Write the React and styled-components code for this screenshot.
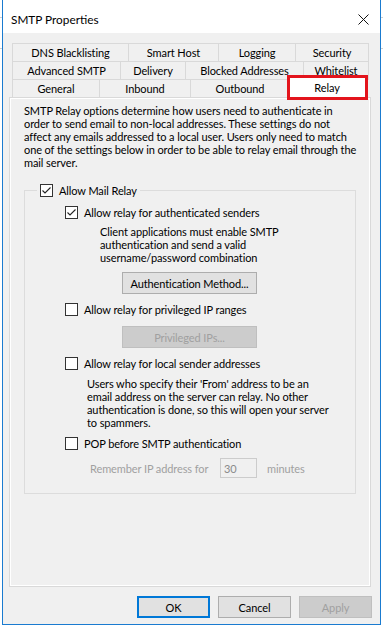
import React from "react";
import styled, { createGlobalStyle } from "styled-components";

const GlobalStyle = createGlobalStyle`
  html, body { margin: 0; padding: 0; }
  body {
    background-color: #fff;
    background-image: linear-gradient(#cfcfcf, #cfcfcf), linear-gradient(#cfcfcf, #cfcfcf);
    background-size: 100% 1px, 100% 1px;
    background-position: 0 17px, 0 48px;
    background-repeat: no-repeat;
    font-family: Lato, "Liberation Sans", sans-serif;
    font-size: 11px;
    letter-spacing: -0.1px;
    color: #000;
  }
  #root { min-height: 633px; }
`;

const Window = styled.div`
  margin-left: 2px;
  width: 377px;
  height: 624px;
  border: 1px solid #1a7bd0;
  border-top: none;
  background: #f0f0f0;
  display: flex;
  flex-direction: column;
`;

const TitleBar = styled.div`
  height: 33px;
  box-sizing: border-box;
  padding: 5px 11px 0 8px;
  background: #fff;
  display: flex;
  align-items: center;
  justify-content: space-between;
`;

const Title = styled.span`
  font-size: 11.8px;
  letter-spacing: 0;
`;

const Body = styled.div`
  display: flex;
  flex-direction: column;
  padding: 10px 9px 0 6px;
`;

const TabStrip = styled.div`
  position: relative;
  margin-left: 3px;
  width: 357px;
  display: flex;
  flex-direction: column;
`;

const TabRow = styled.div`
  display: flex;
  height: 18px;
`;

const Tab = styled.div`
  width: ${(p) => p.$w + 1}px;
  height: ${(p) => (p.$selected ? 22 : 19)}px;
  margin-top: ${(p) => (p.$selected ? -2 : 0)}px;
  margin-left: ${(p) => (p.$selected ? -2 : 0)}px;
  margin-right: -1px;
  box-sizing: border-box;
  border: 1px solid #d9d9d9;
  border-bottom: ${(p) => (p.$selected ? "none" : "1px solid #d9d9d9")};
  background: ${(p) => (p.$selected ? "#fff" : "#f0f0f0")};
  position: relative;
  z-index: ${(p) => (p.$selected ? 2 : 0)};
  display: flex;
  align-items: center;
  justify-content: center;
  padding-bottom: ${(p) => (p.$selected ? 2 : 0)}px;
  white-space: nowrap;
  overflow: hidden;
`;

const Highlight = styled.div`
  position: absolute;
  left: 275px;
  top: 32px;
  width: 81px;
  height: 25px;
  box-sizing: border-box;
  border: 3px solid #e3141c;
  z-index: 3;
  pointer-events: none;
`;

const Panel = styled.div`
  width: 362px;
  height: 490px;
  box-sizing: border-box;
  border: 1px solid #d9d9d9;
  box-shadow: inset 1px 1px 0 #fff, inset -1px -1px 0 #fff;
  padding: 6px 14px 0 14px;
  display: flex;
  flex-direction: column;
  align-items: flex-start;
`;

const Text = styled.div`
  line-height: 13px;
  white-space: nowrap;
  margin-left: ${(p) => p.$ml || 0}px;
  margin-top: ${(p) => p.$mt || 0}px;
`;

const GroupBox = styled.fieldset`
  margin: 13px 0 0 0;
  padding: 0 0 15px 12px;
  width: 332px;
  box-sizing: border-box;
  border: 1px solid #dcdcdc;
  min-width: 0;
  display: flex;
  flex-direction: column;
  align-items: flex-start;
`;

const Legend = styled.legend`
  padding: 0 3px;
  height: 16px;
`;

const OptionRow = styled.label`
  display: flex;
  align-items: center;
  gap: 6px;
  height: ${(p) => p.$h || 15}px;
  margin-left: ${(p) => p.$ml || 0}px;
  margin-top: ${(p) => p.$mt || 0}px;
  white-space: nowrap;
`;

const Box = styled.span`
  width: 13px;
  height: 13px;
  box-sizing: border-box;
  border: 1px solid #333;
  background: #fff;
  display: flex;
  flex-shrink: 0;
`;

const Button = styled.div`
  width: ${(p) => p.$w}px;
  height: 22px;
  box-sizing: border-box;
  margin-left: ${(p) => p.$ml || 0}px;
  margin-top: ${(p) => p.$mt || 0}px;
  background: ${(p) => (p.$disabled ? "#cccccc" : "#e1e1e1")};
  border: ${(p) =>
    p.$default ? "2px solid #0078d7" : p.$disabled ? "1px solid #bfbfbf" : "1px solid #adadad"};
  color: ${(p) => (p.$disabled ? "#a0a0a0" : "#000")};
  display: flex;
  align-items: center;
  justify-content: center;
  white-space: nowrap;
`;

const RememberRow = styled.div`
  display: flex;
  align-items: center;
  height: 20px;
  margin-left: 53px;
  margin-top: 7px;
  color: #a0a0a0;
`;

const RememberLabel = styled.span`
  width: 130px;
  white-space: nowrap;
`;

const NumberBox = styled.div`
  width: 37px;
  height: 20px;
  box-sizing: border-box;
  border: 1px solid #cccccc;
  background: #f0f0f0;
  color: #8a8a8a;
  padding-left: 3px;
  display: flex;
  align-items: center;
`;

const Unit = styled.span`
  margin-left: 10px;
`;

const Footer = styled.div`
  display: flex;
  justify-content: flex-end;
  gap: 8px;
  margin-top: 9px;
  margin-right: -1px;
`;

function CheckBox({ checked }) {
  return (
    <Box>
      {checked && (
        <svg width="11" height="11" viewBox="0 0 11 11">
          <path d="M1.5 5.5 L4 8 L9.5 2.5" fill="none" stroke="#222" strokeWidth="1.1" />
        </svg>
      )}
    </Box>
  );
}

function CloseIcon() {
  return (
    <svg width="11" height="11" viewBox="0 0 11 11">
      <path d="M0.5 0.5 L10.5 10.5 M10.5 0.5 L0.5 10.5" stroke="#111" strokeWidth="1" />
    </svg>
  );
}

const tabRows = [
  [
    ["DNS Blacklisting", 116],
    ["Smart Host", 90],
    ["Logging", 77],
    ["Security", 73],
  ],
  [
    ["Advanced SMTP", 108],
    ["Delivery", 65],
    ["Blocked Addresses", 118],
    ["Whitelist", 65],
  ],
  [
    ["General", 87],
    ["Inbound", 91],
    ["Outbound", 99],
    ["Relay", 79, true],
  ],
];

const intro = [
  "SMTP Relay options determine how users need to authenticate in",
  "order to send email to non-local addresses. These settings do not",
  "affect any emails addressed to a local user. Users only need to match",
  "one of the settings below in order to be able to relay email through the",
  "mail server.",
];

const authDesc = [
  "Client applications must enable SMTP",
  "authentication and send a valid",
  "username/password combination",
];

const localDesc = [
  "Users who specify their 'From' address to be an",
  "email address on the server can relay. No other",
  "authentication is done, so this will open your server",
  "to spammers.",
];

function Lines({ lines, ml, mt }) {
  return (
    <Text $ml={ml} $mt={mt}>
      {lines.map((l, i) => (
        <div key={i}>{l}</div>
      ))}
    </Text>
  );
}

export default function App() {
  return (
    <>
      <GlobalStyle />
      <Window>
        <TitleBar>
          <Title>SMTP Properties</Title>
          <CloseIcon />
        </TitleBar>
        <Body>
          <TabStrip>
            {tabRows.map((row, r) => (
              <TabRow key={r}>
                {row.map(([label, w, sel]) => (
                  <Tab key={label} $w={w} $selected={sel}>
                    {label}
                  </Tab>
                ))}
              </TabRow>
            ))}
            <Highlight />
          </TabStrip>
          <Panel>
            <Lines lines={intro} />
            <GroupBox>
              <Legend>
                <OptionRow $h={16}>
                  <CheckBox checked />
                  Allow Mail Relay
                </OptionRow>
              </Legend>
              <OptionRow $ml={28} $mt={7}>
                <CheckBox checked />
                Allow relay for authenticated senders
              </OptionRow>
              <Lines lines={authDesc} ml={63} mt={5} />
              <Button $w={135} $ml={85} $mt={8}>
                Authentication Method...
              </Button>
              <OptionRow $ml={28} $mt={8}>
                <CheckBox />
                Allow relay for privileged IP ranges
              </OptionRow>
              <Button $w={135} $ml={85} $mt={9} $disabled>
                Privileged IPs...
              </Button>
              <OptionRow $ml={28} $mt={8}>
                <CheckBox />
                Allow relay for local sender addresses
              </OptionRow>
              <Lines lines={localDesc} ml={50} mt={6} />
              <OptionRow $ml={28} $mt={7}>
                <CheckBox />
                POP before SMTP authentication
              </OptionRow>
              <RememberRow>
                <RememberLabel>Remember IP address for</RememberLabel>
                <NumberBox>30</NumberBox>
                <Unit>minutes</Unit>
              </RememberRow>
            </GroupBox>
          </Panel>
          <Footer>
            <Button $w={73} $default>OK</Button>
            <Button $w={73}>Cancel</Button>
            <Button $w={73} $disabled>Apply</Button>
          </Footer>
        </Body>
      </Window>
    </>
  );
}
